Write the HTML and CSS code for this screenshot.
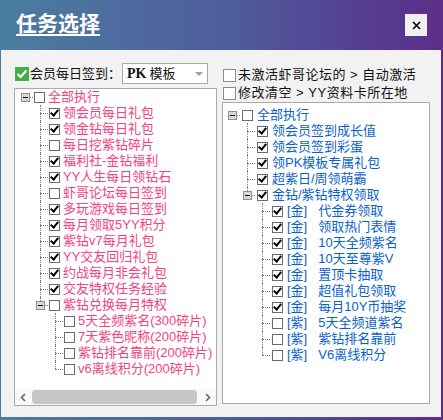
FILE: index.html
```html
<!DOCTYPE html>
<html lang="zh-CN">
<head>
<meta charset="utf-8">
<title>任务选择</title>
<link rel="stylesheet" href="styles.css">
</head>
<body>
<div class="window">
  <div class="titlebar">
    <span class="title">任务选择</span>
    <div class="close"><svg width="9" height="9" viewBox="0 0 9 9"><path d="M1 1 L8 8 M8 1 L1 8" stroke="#000" stroke-width="1.6" fill="none"/></svg></div>
  </div>
  <div class="content">
    <div class="col col-left">
      <div class="opt-row">
        <svg class="gcheck" width="14" height="14" viewBox="0 0 14 14"><rect width="14" height="14" fill="#45ad45"/><path d="M2.6 7 L5.6 10 L11.4 3.4" fill="none" stroke="#fff" stroke-width="2.2"/></svg>
        <span class="lbl">会员每日签到：</span>
        <div class="select"><span class="sel-text"><b class="pk">PK</b>模板</span><span class="arrow"></span></div>
      </div>
      <div class="panel panel-left">
        <div class="tree tree-l pink">
          <div class="row l0"><span class="tw root"><span class="exp"></span></span><span class="cb"></span><span class="txt">全部执行</span></div>
          <div class="row l1"><span class="tw mid"></span><span class="cb on"></span><span class="txt">领会员每日礼包</span></div>
          <div class="row l1"><span class="tw mid"></span><span class="cb on"></span><span class="txt">领金钻每日礼包</span></div>
          <div class="row l1"><span class="tw mid"></span><span class="cb"></span><span class="txt">每日挖紫钻碎片</span></div>
          <div class="row l1"><span class="tw mid"></span><span class="cb on"></span><span class="txt">福利社-金钻福利</span></div>
          <div class="row l1"><span class="tw mid"></span><span class="cb on"></span><span class="txt">YY人生每日领钻石</span></div>
          <div class="row l1"><span class="tw mid"></span><span class="cb"></span><span class="txt">虾哥论坛每日签到</span></div>
          <div class="row l1"><span class="tw mid"></span><span class="cb on"></span><span class="txt">多玩游戏每日签到</span></div>
          <div class="row l1"><span class="tw mid"></span><span class="cb on"></span><span class="txt">每月领取5YY积分</span></div>
          <div class="row l1"><span class="tw mid"></span><span class="cb on"></span><span class="txt">紫钻v7每月礼包</span></div>
          <div class="row l1"><span class="tw mid"></span><span class="cb on"></span><span class="txt">YY交友回归礼包</span></div>
          <div class="row l1"><span class="tw mid"></span><span class="cb on"></span><span class="txt">约战每月非会礼包</span></div>
          <div class="row l1"><span class="tw mid"></span><span class="cb on"></span><span class="txt">交友特权任务经验</span></div>
          <div class="row l1"><span class="tw end"><span class="exp"></span></span><span class="cb"></span><span class="txt">紫钻兑换每月特权</span></div>
          <div class="row l2"><span class="tw mid"></span><span class="cb"></span><span class="txt">5天全频紫名(300碎片)</span></div>
          <div class="row l2"><span class="tw mid"></span><span class="cb"></span><span class="txt">7天紫色昵称(200碎片)</span></div>
          <div class="row l2"><span class="tw mid"></span><span class="cb"></span><span class="txt">紫钻排名靠前(200碎片)</span></div>
          <div class="row l2"><span class="tw end"></span><span class="cb"></span><span class="txt">v6离线积分(200碎片)</span></div>
        </div>
        <div class="hscroll">
          <span class="sb-btn"><svg width="6" height="9" viewBox="0 0 6 9"><path d="M5 1 L1.5 4.5 L5 8" stroke="#6a6a6a" stroke-width="1.7" fill="none"/></svg></span>
          <span class="sb-thumb"></span>
          <span class="sb-btn"><svg width="6" height="9" viewBox="0 0 6 9"><path d="M1 1 L4.5 4.5 L1 8" stroke="#6a6a6a" stroke-width="1.7" fill="none"/></svg></span>
        </div>
      </div>
    </div>
    <div class="col col-right">
      <div class="opt"><span class="box"></span><span class="opt-text">未激活虾哥论坛的 &gt; 自动激活</span></div>
      <div class="opt"><span class="box"></span><span class="opt-text">修改清空 &gt; YY资料卡所在地</span></div>
      <div class="panel panel-right">
        <div class="tree tree-r blue">
          <div class="row l0"><span class="tw root"><span class="exp"></span></span><span class="cb"></span><span class="txt">全部执行</span></div>
          <div class="row l1"><span class="tw mid"></span><span class="cb on"></span><span class="txt">领会员签到成长值</span></div>
          <div class="row l1"><span class="tw mid"></span><span class="cb on"></span><span class="txt">领会员签到彩蛋</span></div>
          <div class="row l1"><span class="tw mid"></span><span class="cb on"></span><span class="txt">领PK模板专属礼包</span></div>
          <div class="row l1"><span class="tw mid"></span><span class="cb on"></span><span class="txt">超紫日/周领萌霸</span></div>
          <div class="row l1"><span class="tw end"><span class="exp"></span></span><span class="cb on"></span><span class="txt">金钻/紫钻特权领取</span></div>
          <div class="row l2"><span class="tw mid"></span><span class="cb on"></span><span class="txt"><span class="tag">[金]</span>代金券领取</span></div>
          <div class="row l2"><span class="tw mid"></span><span class="cb on"></span><span class="txt"><span class="tag">[金]</span>领取热门表情</span></div>
          <div class="row l2"><span class="tw mid"></span><span class="cb on"></span><span class="txt"><span class="tag">[金]</span>10天全频紫名</span></div>
          <div class="row l2"><span class="tw mid"></span><span class="cb on"></span><span class="txt"><span class="tag">[金]</span>10天至尊紫V</span></div>
          <div class="row l2"><span class="tw mid"></span><span class="cb on"></span><span class="txt"><span class="tag">[金]</span>置顶卡抽取</span></div>
          <div class="row l2"><span class="tw mid"></span><span class="cb on"></span><span class="txt"><span class="tag">[金]</span>超值礼包领取</span></div>
          <div class="row l2"><span class="tw mid"></span><span class="cb on"></span><span class="txt"><span class="tag">[金]</span>每月10Y币抽奖</span></div>
          <div class="row l2"><span class="tw mid"></span><span class="cb"></span><span class="txt"><span class="tag">[紫]</span>5天全频道紫名</span></div>
          <div class="row l2"><span class="tw mid"></span><span class="cb"></span><span class="txt"><span class="tag">[紫]</span>紫钻排名靠前</span></div>
          <div class="row l2"><span class="tw end"></span><span class="cb"></span><span class="txt"><span class="tag">[紫]</span>V6离线积分</span></div>
        </div>
      </div>
    </div>
  </div>
</div>
</body>
</html>
```

FILE: styles.css
```css
* { box-sizing: border-box; }
html, body { margin: 0; padding: 0; }
body {
  width: 443px;
  height: 420px;
  overflow: hidden;
  font-family: "Liberation Sans", "Noto Sans CJK SC", sans-serif;
  font-size: 13px;
  color: #111;
}
.window {
  width: 443px;
  height: 420px;
  display: flex;
  flex-direction: column;
  background: linear-gradient(90deg, #4a7e9f 0%, #4d6a9e 30%, #4f5a9b 55%, #553f92 80%, #5b2e8a 100%);
}
.titlebar {
  height: 50px;
  flex: none;
  display: flex;
  justify-content: space-between;
  align-items: flex-start;
  padding: 0 16px;
}
.title {
  color: #fff;
  font-family: "Noto Sans CJK SC", sans-serif;
  font-weight: bold;
  font-size: 21px;
  line-height: 24px;
  margin-top: 10px;
  text-decoration: underline;
  text-decoration-thickness: 2px;
  text-underline-offset: 3px;
}
.close {
  width: 22px;
  height: 22px;
  margin-top: 14px;
  background: #f0f0f0;
  display: flex;
  align-items: center;
  justify-content: center;
}
.content {
  flex: 1;
  margin: 0 2px 3px 1px;
  background: #f2f2f2;
  display: flex;
  gap: 5px;
  padding: 13px 11px 0 13px;
}
.col { display: flex; flex-direction: column; }
.col-left { width: 203px; }
.col-right { width: 208px; padding-top: 3px; }

.opt-row {
  height: 21px;
  display: flex;
  align-items: center;
  margin-bottom: 4px;
}
.gcheck { margin-left: 1px; flex: none; }
.lbl { margin-left: 1px; line-height: 21px; white-space: nowrap; }
.select {
  width: 86px;
  height: 21px;
  margin-left: 1px;
  background: #fff;
  border: 1px solid #a8a8a8;
  display: flex;
  align-items: center;
  justify-content: space-between;
  padding: 0 4px 0 4px;
}
.sel-text { line-height: 19px; white-space: nowrap; }
.pk {
  font-family: "Liberation Serif", serif;
  font-weight: bold;
  font-size: 14px;
  margin-right: 3px;
}
.arrow {
  width: 0;
  height: 0;
  border-left: 4px solid transparent;
  border-right: 4px solid transparent;
  border-top: 4px solid #a0a0a0;
  margin-top: 1px;
}

.opt {
  height: 18px;
  display: flex;
  align-items: center;
  white-space: nowrap;
}
.box {
  width: 13px;
  height: 13px;
  margin-left: 1px;
  border: 1px solid #8c8c8c;
  background: #fff;
  flex: none;
}
.opt-text { margin-left: 2px; line-height: 18px; color: #111; letter-spacing: 0.5px; }

.panel {
  background: #fff;
  border: 1px solid #a9a9a9;
}
.panel-left {
  height: 318px;
  display: flex;
  flex-direction: column;
}
.panel-right {
  height: 302px;
  padding-top: 4px;
}

.tree { display: flex; flex-direction: column; }
.pink { color: #f3437f; }
.blue { color: #0a62cc; }
.row {
  height: 16px;
  display: flex;
  align-items: center;
  white-space: nowrap;
}
.tree-l .l0 { padding-left: 3px; }
.tree-l .l1 { padding-left: 18px; }
.tree-l .l2 { padding-left: 33px; }
.tree-r .l0 { padding-left: 2px; }
.tree-r .l1 { padding-left: 17px; }
.tree-r .l2 { padding-left: 32px; }

.tw {
  position: relative;
  width: 15px;
  height: 16px;
  flex: none;
}
.tw::after {
  content: "";
  position: absolute;
  left: 7px;
  right: 0;
  top: 8px;
  border-top: 1px dotted #7c7c7c;
}
.tw.mid::before,
.tw.end::before {
  content: "";
  position: absolute;
  left: 7px;
  top: 0;
  border-left: 1px dotted #7c7c7c;
}
.tw.mid::before { bottom: 0; }
.tw.end::before { height: 8px; }
.exp {
  position: absolute;
  left: 3px;
  top: 4px;
  width: 9px;
  height: 9px;
  border: 1px solid #8e8e8e;
  background: #d9d9d9;
  z-index: 1;
}
.exp::after {
  content: "";
  position: absolute;
  left: 1px;
  top: 3px;
  width: 5px;
  height: 1px;
  background: #000;
}
.cb {
  width: 11px;
  height: 11px;
  flex: none;
  border: 1px solid #6b6b6b;
  background: #fff;
  margin-left: 1px;
  display: flex;
  align-items: center;
  justify-content: center;
}
.tree-r .cb { margin-left: 2px; }
.cb.on::after {
  content: "";
  width: 3px;
  height: 6px;
  border: solid #000;
  border-width: 0 2px 2px 0;
  transform: rotate(40deg);
  margin-top: -2px;
}
.txt { margin-left: 3px; line-height: 16px; }
.tree-r .txt { margin-left: 4px; }
.tag { margin-right: 11px; }

.hscroll {
  margin-top: auto;
  height: 16px;
  flex: none;
  display: flex;
  align-items: center;
  background: #f8f8f8;
}
.sb-btn {
  width: 16px;
  height: 16px;
  flex: none;
  display: flex;
  align-items: center;
  justify-content: center;
}
.sb-thumb {
  flex: 1;
  height: 14px;
  margin: 0 3px 0 1px;
  background: #c6c6c6;
  border-radius: 4px;
}
```
